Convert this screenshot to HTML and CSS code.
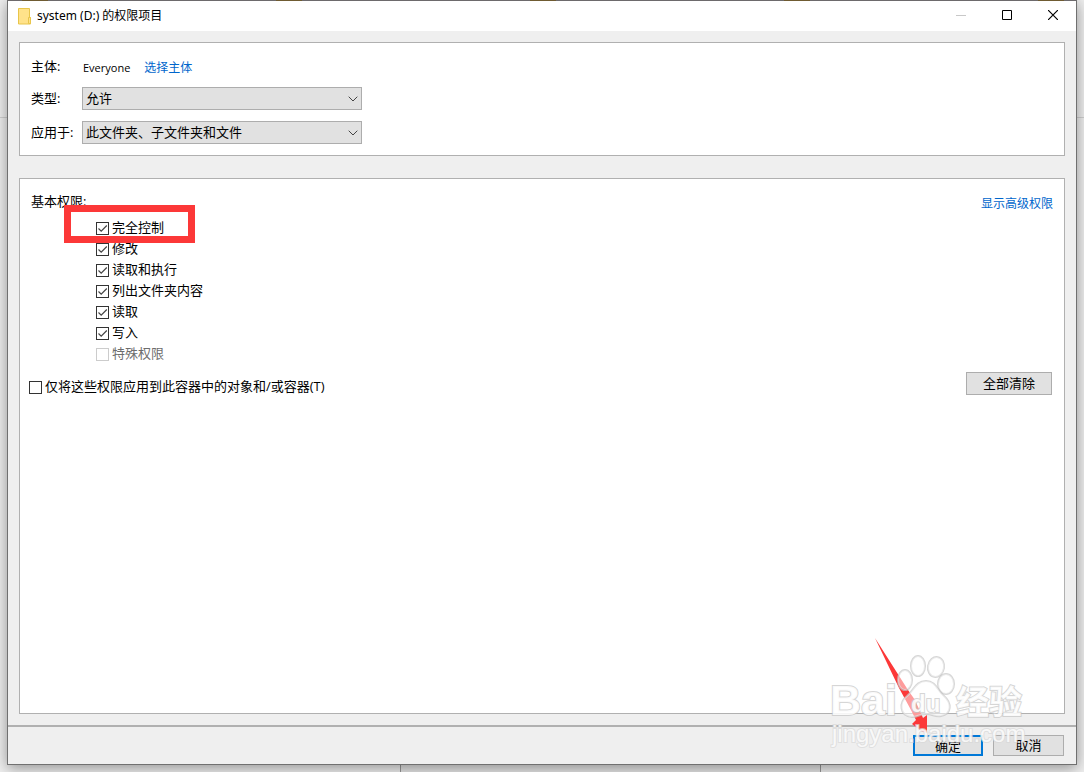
FILE: index.html
```html
<!DOCTYPE html>
<html lang="zh-CN">
<head>
<meta charset="utf-8">
<meta name="viewport" content="width=device-width, initial-scale=1">
<title>system (D:) 的权限项目</title>
<link rel="stylesheet" href="styles.css">
</head>
<body>
<div class="desktop">
  <div class="behind-line" aria-hidden="true"></div>
  <div class="behind-panel" aria-hidden="true"></div>
  <main class="window">
    <header class="titlebar">
      <svg class="folder" viewBox="0 0 14 17" width="14" height="17" aria-hidden="true">
        <path d="M.5.5h11v9h1v6.500h-12z" fill="#ffe28a" stroke="#e8c54a"/>
        <path d="M10.500 15.500v-6h2v6z" fill="#ffe28a" stroke="#e8c54a"/>
      </svg>
      <h1 class="title">system (D:) 的权限项目</h1>
      <div class="controls">
        <button class="control" type="button" aria-label="最小化" disabled>
          <svg viewBox="0 0 10 10" width="10" height="10"><path d="M0 5.500h10" stroke="#c8c8c8"/></svg>
        </button>
        <button class="control" type="button" aria-label="最大化">
          <svg viewBox="0 0 10 10" width="10" height="10"><path d="M.5.5h9v9h-9z" fill="none" stroke="#000"/></svg>
        </button>
        <button class="control" type="button" aria-label="关闭">
          <svg viewBox="0 0 10 10" width="10" height="10"><path d="M0 0l10 10M10 0L0 10" stroke="#000" stroke-width="1.200"/></svg>
        </button>
      </div>
    </header>

    <div class="content">
      <section class="panel principal">
        <span class="label">主体:</span>
        <div class="who"><span class="name">Everyone</span><a class="link" href="#">选择主体</a></div>
        <label class="label" for="type">类型:</label>
        <div class="dropdown">
          <select id="type"><option>允许</option></select>
          <svg class="chevron" viewBox="0 0 10 6" width="10" height="6"><path d="M.7.7L5 5 9.300.7" fill="none" stroke="#444"/></svg>
        </div>
        <label class="label" for="scope">应用于:</label>
        <div class="dropdown">
          <select id="scope"><option>此文件夹、子文件夹和文件</option></select>
          <svg class="chevron" viewBox="0 0 10 6" width="10" height="6"><path d="M.7.7L5 5 9.300.7" fill="none" stroke="#444"/></svg>
        </div>
      </section>

      <section class="panel permissions">
        <div class="heading">
          <h2 class="subtitle">基本权限:</h2>
          <a class="link advanced" href="#">显示高级权限</a>
        </div>
        <ul class="list">
          <li class="highlighted"><label class="check"><input type="checkbox" checked>完全控制</label></li>
          <li><label class="check"><input type="checkbox" checked>修改</label></li>
          <li><label class="check"><input type="checkbox" checked>读取和执行</label></li>
          <li><label class="check"><input type="checkbox" checked>列出文件夹内容</label></li>
          <li><label class="check"><input type="checkbox" checked>读取</label></li>
          <li><label class="check"><input type="checkbox" checked>写入</label></li>
          <li><label class="check muted"><input type="checkbox" disabled>特殊权限</label></li>
        </ul>
        <div class="options">
          <label class="check apply"><input type="checkbox">仅将这些权限应用到此容器中的对象和/或容器(T)</label>
          <button class="button clear" type="button">全部清除</button>
        </div>
      </section>
    </div>

    <footer class="actions">
      <button class="button primary" type="button">确定</button>
      <button class="button" type="button">取消</button>
    </footer>
  </main>

  <svg class="overlay" viewBox="-40 0 254 122" width="254" height="122" aria-hidden="true">
    <path class="arrow" d="M5 8L38 60 45 70 53 88 57 85 57 103 51 101 42 94 46 90 41 80 29 58z"/>
    <g class="mark">
      <text class="brand" x="-40" y="85">Bai</text>
      <ellipse cx="35" cy="50" rx="7" ry="10"/>
      <ellipse cx="48" cy="36" rx="7" ry="10"/>
      <ellipse cx="66" cy="37" rx="8" ry="10" transform="rotate(10 66 37)"/>
      <ellipse cx="76" cy="54" rx="8" ry="10"/>
      <path d="M56 51C46 51 44 60 37 66C29 72 29 86 42 87C49 87 49 84 56 84C63 84 64 87 71 86C82 84 82 73 74 66C67 60 66 51 56 51z"/>
      <text class="du" x="41" y="82">du</text>
      <text class="cjk" x="86" y="84">经验</text>
      <text class="url" x="-38" y="112">jingyan.baidu.com</text>
    </g>
  </svg>
</div>
</body>
</html>
```
FILE: styles.css
```css
*,
*::before,
*::after {
  box-sizing: border-box;
}

body {
  margin: 0;
  background: #efefef;
  color: #000;
  font: 13px/18px "Open Sans", "Noto Sans CJK SC", sans-serif;
}

.desktop {
  position: relative;
  display: flex;
  min-height: 100vh;
  padding: 0 7px 7px;
  overflow: hidden;
}

/* Parts of the windows behind the dialog */
.behind-line {
  position: absolute;
  top: 117px;
  left: 0;
  right: 0;
  height: 1px;
  background: #d0d0d0;
}

.behind-panel {
  position: absolute;
  bottom: 0;
  left: 400px;
  right: 263px;
  height: 20px;
  background: #e6e6e6;
  border: solid #999;
  border-width: 0 1px;
}

.window {
  position: relative;
  flex: 1;
  display: flex;
  flex-direction: column;
  background: #efefef;
  border: 1px solid #707070;
  box-shadow: 0 3px 14px rgba(0, 0, 0, 0.4);
}

.window::before {
  content: "";
  position: absolute;
  inset: -1px 0 auto;
  height: 1px;
  background: repeating-linear-gradient(90deg, #6d6a6c 0 14px, #6f5b32 14px 40px, #6d6a6c 40px 254px);
}

.titlebar {
  display: flex;
  align-items: center;
  height: 30px;
  padding-left: 10px;
  background: #fff;
}

.folder {
  margin-right: 5px;
}

.title {
  flex: 1;
  margin: 0;
  font-family: "Noto Sans", "Noto Sans CJK SC", sans-serif;
  font-size: 12px;
  font-weight: 400;
}

.controls {
  display: flex;
  align-self: stretch;
}

.control {
  display: flex;
  align-items: center;
  justify-content: center;
  width: 46px;
  padding: 0 0 2px;
  background: none;
  border: 0;
}

.content {
  flex: 1;
  display: flex;
  flex-direction: column;
  gap: 22px;
  padding: 11px;
}

.panel {
  background: #fff;
  border: 1px solid #b0b0b0;
}

.principal {
  display: grid;
  grid-template-columns: 51px minmax(0, 280px);
  row-gap: 11px;
  align-items: center;
  padding: 13px 11px 11px;
}

.label {
  padding-bottom: 1px;
  white-space: nowrap;
}

.who {
  display: flex;
  gap: 14px;
  height: 20px;
  align-items: center;
  padding: 3px 0 0 1px;
}

.name {
  font-size: 11px;
}

.link {
  color: #0066cc;
  font-size: 12px;
  text-decoration: none;
}

.dropdown {
  position: relative;
  display: flex;
}

.dropdown select {
  appearance: none;
  width: 100%;
  height: 23px;
  padding: 0 24px 2px 3px;
  background: #e1e1e1;
  border: 1px solid #adadad;
  border-radius: 0;
  color: #000;
  font: inherit;
}

.chevron {
  position: absolute;
  right: 4px;
  top: 9px;
  pointer-events: none;
}

.permissions {
  flex: 1;
  padding: 13px 11px;
}

.heading {
  display: flex;
  justify-content: space-between;
  margin-bottom: 5px;
}

.subtitle {
  margin: 0;
  font-size: 13px;
  font-weight: 400;
}

.advanced {
  margin-top: 3px;
}

.list {
  margin: 0 0 7px;
  padding: 0 0 0 65px;
  list-style: none;
}

.highlighted {
  position: relative;
}

/* Red annotation frame around the first permission */
.highlighted::after {
  content: "";
  position: absolute;
  top: -13px;
  left: -32px;
  width: 131px;
  height: 38px;
  border: 7px solid #fc3838;
  pointer-events: none;
}

.check {
  display: flex;
  align-items: flex-start;
  gap: 3px;
  height: 21px;
}

.check input {
  appearance: none;
  flex: none;
  width: 13px;
  height: 13px;
  margin: 4px 0 0;
  background: #fff;
  border: 1px solid #333;
}

.check input:checked {
  background: url("data:image/svg+xml,%3Csvg xmlns='http://www.w3.org/2000/svg' viewBox='0 0 11 11'%3E%3Cpath d='M1.500 5.500L4.200 8.200L9.800 2.500' fill='none' stroke='%23444' stroke-width='1.200'/%3E%3C/svg%3E");
}

.check input:disabled {
  border-color: #ccc;
}

.muted {
  color: #6d6d6d;
}

.options {
  display: flex;
  align-items: flex-start;
  justify-content: space-between;
  margin: 0 1px 0 -2px;
}

.apply {
  margin-top: 5px;
}

.button {
  width: 71px;
  height: 21px;
  padding: 0 0 2px;
  background: #e1e1e1;
  border: 1px solid #adadad;
  color: #000;
  font: inherit;
  line-height: 18px;
}

.clear {
  width: 86px;
  height: 23px;
}

.primary {
  width: 70px;
  border: 2px solid #0078d7;
}

.actions {
  display: flex;
  justify-content: flex-end;
  gap: 10px;
  padding: 8px 12px;
  border-top: 2px solid #b0b0b0;
}

/* Annotation arrow and site watermark */
.overlay {
  position: absolute;
  right: 0;
  bottom: 20px;
  pointer-events: none;
}

.arrow {
  fill: #fc3838;
}

.mark {
  fill: #fff;
  fill-opacity: 0.5;
  stroke: #c4c4c4;
  stroke-width: 2px;
  stroke-opacity: 0.7;
  paint-order: stroke;
  font-family: "Liberation Sans", "Noto Sans CJK SC", sans-serif;
}

.brand {
  font-size: 43px;
  font-weight: 700;
}

.du {
  font-size: 24px;
  font-weight: 700;
}

.cjk {
  font-family: "Noto Sans CJK SC", sans-serif;
  font-size: 33px;
  font-weight: 700;
}

.brand,
.du,
.cjk {
  fill-opacity: 0.9;
}

.url {
  font-size: 24px;
  fill-opacity: 0.8;
  stroke: #d8d8d8;
}
```
